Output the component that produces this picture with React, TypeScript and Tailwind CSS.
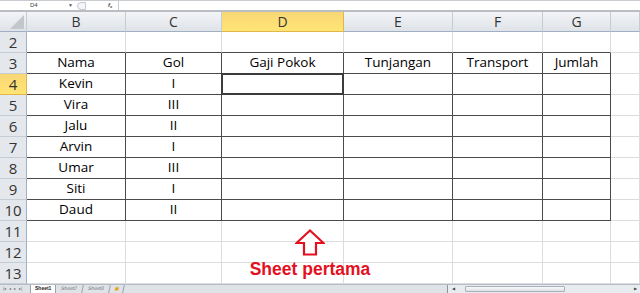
import React from 'react';

const cols = ['B', 'C', 'D', 'E', 'F', 'G', ''];
const data: Record<number, string[]> = {
  3: ['Nama', 'Gol', 'Gaji Pokok', 'Tunjangan', 'Transport', 'Jumlah'],
  4: ['Kevin', 'I'],
  5: ['Vira', 'III'],
  6: ['Jalu', 'II'],
  7: ['Arvin', 'I'],
  8: ['Umar', 'III'],
  9: ['Siti', 'I'],
  10: ['Daud', 'II'],
};
const rows = [2, 3, 4, 5, 6, 7, 8, 9, 10, 11, 12, 13];

function Cell({ row, col }: { row: number; col: number }) {
  const inTable = row >= 3 && row <= 10 && col <= 5;
  const topOfTable = row === 2 && col <= 5;
  const text = data[row]?.[col] ?? '';
  const selected = row === 4 && col === 2;
  return (
    <div
      className={
        'relative box-border h-[21px] flex items-center justify-center border-r border-b text-[13.5px] leading-none text-black ' +
        (inTable
          ? 'border-r-[#4a4a4a] border-b-[#4a4a4a]'
          : topOfTable
          ? 'border-r-[#dadcdd] border-b-[#4a4a4a]'
          : 'border-r-[#dadcdd] border-b-[#dadcdd]')
      }
    >
      {text}
      {selected && (
        <div className="absolute -left-px -top-px -right-px -bottom-px border-2 border-[#3c3c3c]" />
      )}
    </div>
  );
}

export default function App() {
  return (
    <div className="relative w-[640px] h-[293px] overflow-hidden bg-white" style={{ fontFamily: '"Open Sans", "Noto Sans", sans-serif' }}>
      {/* formula bar */}
      <div className="h-[12px] border-t border-b-2 border-t-[#c8ccd1] border-b-[#b9bdc2] bg-white flex items-center text-[6px] text-[#444]" style={{ fontFamily: '"Liberation Sans", sans-serif' }}>
        <span className="ml-[30px] w-[38px]">D4</span>
        <span className="text-[5px] text-[#555]">▼</span>
        <div className="ml-[4px] w-[9px] h-[8px] rounded-l-full border border-[#c6cad0] bg-[#f4f5f7]" />
        <span className="ml-[22px] italic font-bold text-[6px]">f<sub className="text-[4px]">x</sub></span>
        <div className="ml-[6px] h-full border-l border-[#c8ccd1]" />
      </div>

      {/* column headers */}
      <div className="grid grid-cols-[27px_99px_96px_122px_109px_90px_68px_1fr]">
        <div className="h-[20px] box-border border-r border-b border-r-[#c6ccd4] border-b-[#9fb0c4] bg-gradient-to-b from-[#f2f4f7] to-[#dfe3e8] flex items-end justify-end p-[2px]">
          <svg width="14" height="14" viewBox="0 0 14 14">
            <polygon points="14,0 14,14 0,14" fill="#c3c7cc" />
          </svg>
        </div>
        {cols.map((c) =>
          c === 'D' ? (
            <div key={c} className="h-[20px] box-border border-r border-b border-[#e2b64a] bg-gradient-to-b from-[#f8d775] to-[#ffe574] flex items-center justify-center text-[14px] text-[#333]">
              {c}
            </div>
          ) : (
            <div key={c || 'h'} className="h-[20px] box-border border-r border-b border-r-[#c6ccd4] border-b-[#9fb0c4] bg-gradient-to-b from-[#f2f4f7] to-[#dfe3e8] flex items-center justify-center text-[14px] text-[#333]">
              {c}
            </div>
          )
        )}

        {rows.map((r) => (
          <React.Fragment key={r}>
            <div
              className={
                'h-[21px] box-border border-r border-b flex items-center justify-center text-[15px] text-[#333] ' +
                (r === 4
                  ? 'bg-gradient-to-b from-[#f8d775] to-[#ffe574] border-[#e2b64a]'
                  : 'bg-[#e4e8ed] border-r-[#9fb0c4] border-b-[#c6ccd4]')
              }
            >
              {r}
            </div>
            {cols.map((_, ci) => (
              <Cell key={ci} row={r} col={ci} />
            ))}
          </React.Fragment>
        ))}
      </div>

      {/* sheet tabs */}
      <div className="h-[9px] bg-[#dfe3e8] border-t border-[#b5bcc5] flex items-center text-[5px] text-[#555]" style={{ fontFamily: '"Liberation Sans", sans-serif' }}>
        <div className="flex gap-[3px] pl-[3px] w-[30px] text-[4px] text-[#666]">
          <span>|◂</span><span>◂</span><span>▸</span><span>▸|</span>
        </div>
        <div className="h-full px-[4px] bg-white border-x border-[#9aa3ad] flex items-center font-bold text-[#222]">Sheet1</div>
        <div className="h-full px-[5px] flex items-center text-[#777] border-r border-[#9aa3ad] -skew-x-12">Sheet2</div>
        <div className="h-full px-[5px] flex items-center text-[#777] border-r border-[#9aa3ad] -skew-x-12">Sheet3</div>
        <div className="h-full px-[4px] flex items-center border-r border-[#9aa3ad] -skew-x-12">
          <span className="text-[#e3a21a] text-[6px]">✱</span>
        </div>
        <div className="flex-1" />
        <div className="w-[193px] h-full flex items-center border-l border-[#8c939c] bg-[#e8ebef]">
          <span className="ml-[4px] text-[4px] text-[#444]">◀</span>
          <div className="ml-[10px] w-[100px] h-[6px] rounded-[1px] border border-[#a8b0ba] bg-gradient-to-b from-[#f7f8fa] to-[#dde1e6]" />
          <div className="flex-1" />
          <span className="mr-[3px] text-[4px] text-[#444]">▶</span>
        </div>
      </div>

      {/* annotation */}
      <div className="absolute left-[248px] top-[229px] w-[124px] flex flex-col items-center">
        <svg width="30" height="27" viewBox="0 0 30 27">
          <polygon points="15,1.5 28.5,14 21,14 21,25.5 9,25.5 9,14 1.5,14" fill="white" stroke="#e3101f" strokeWidth="2.2" strokeLinejoin="miter" />
        </svg>
        <span className="mt-[5px] text-[17.5px] leading-none font-bold text-[#e3101f] whitespace-nowrap" style={{ fontFamily: '"Liberation Sans", Arial, sans-serif' }}>
          Sheet pertama
        </span>
      </div>
    </div>
  );
}
